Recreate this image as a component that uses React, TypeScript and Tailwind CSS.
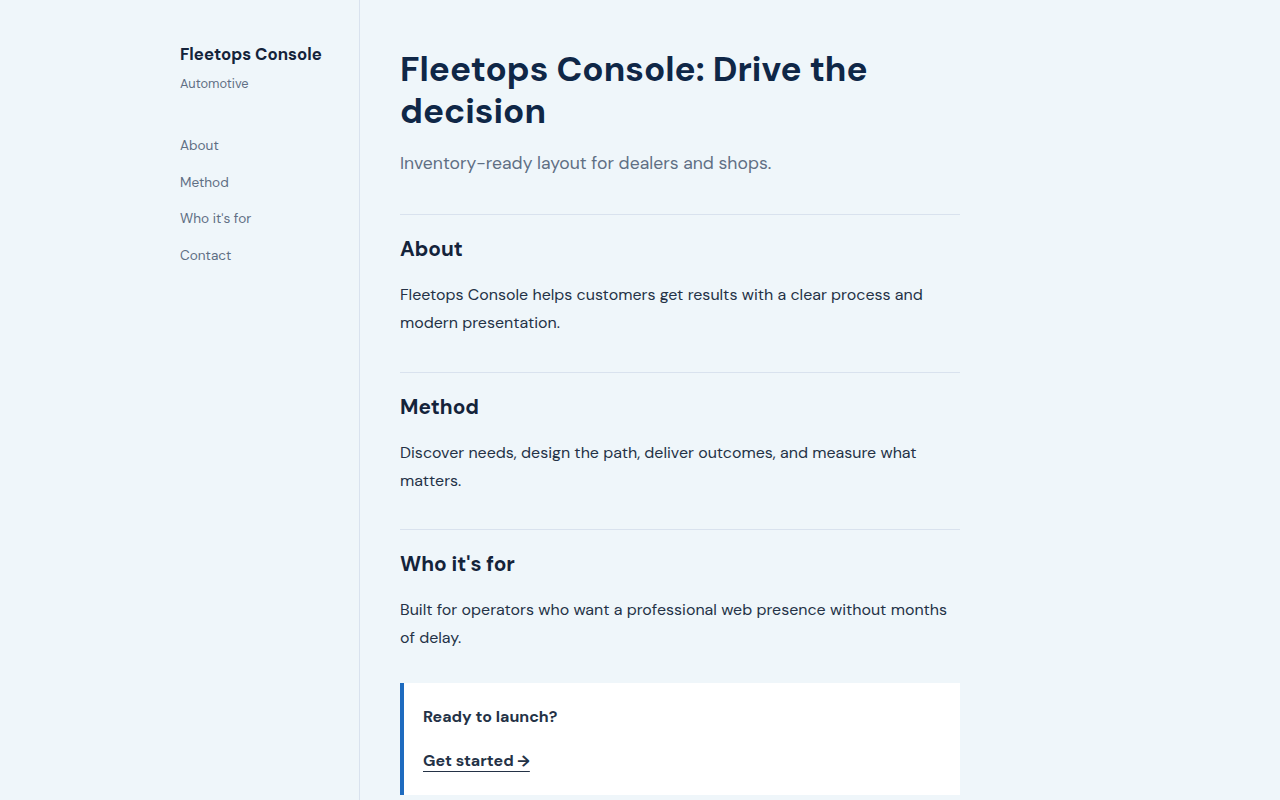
import React from "react";

const font = { fontFamily: '"DM Sans", Lato, "Noto Sans", sans-serif' };

export default function App() {
  const sections = [
    {
      title: "About",
      body: "Fleetops Console helps customers get results with a clear process and modern presentation.",
      pb: "pb-[35px]",
    },
    {
      title: "Method",
      body: "Discover needs, design the path, deliver outcomes, and measure what matters.",
      pb: "pb-[34px]",
    },
    {
      title: "Who it's for",
      body: "Built for operators who want a professional web presence without months of delay.",
      pb: "pb-[31px]",
    },
  ];
  return (
    <div className="min-h-[800px] bg-[#eff6fa]" style={font}>
      <div className="mx-auto flex w-[920px] min-h-[800px]">
        <aside className="w-[180px] shrink-0 border-r border-[#d9e2ee] pt-[43px]">
          <div className="text-[16.8px] font-bold leading-[22px] text-[#14233a]">Fleetops Console</div>
          <div className="mt-[11px] text-[12.8px] leading-[16px] text-[#5f6f84]">Automotive</div>
          <nav className="mt-[45px] flex flex-col gap-[18.67px] text-[13.6px] leading-[18px] text-[#5f6f84]">
            <a>About</a>
            <a>Method</a>
            <a>Who it's for</a>
            <a>Contact</a>
          </nav>
        </aside>
        <main className="w-[600px] pl-[40px] pt-[48px]">
          <h1 className="text-[35px] font-bold leading-[42px] text-[#0f2747]">
            Fleetops Console: Drive the decision
          </h1>
          <p className="mt-[18px] text-[17.6px] leading-[26px] text-[#5f6f84]">
            Inventory-ready layout for dealers and shops.
          </p>
          <div className="mt-[38px]">
            {sections.map((s) => (
              <section key={s.title} className={"border-t border-[#d9e2ee] pt-[20px] " + s.pb}>
                <h2 className="text-[20.8px] font-bold leading-[28px] text-[#14233a]">{s.title}</h2>
                <p className="mt-[18px] text-[16px] leading-[28px] text-[#243246]">{s.body}</p>
              </section>
            ))}
          </div>
          <div className="border-l-[4px] border-[#1e6bbf] bg-white px-[19px] pt-[22px] pb-[22px]">
            <div className="text-[16px] font-bold leading-[24px] text-[#243246]">Ready to launch?</div>
            <a className="mt-[20px] inline-block text-[16px] font-bold leading-[24px] text-[#243246] underline underline-offset-[5px]">
              Get started →
            </a>
          </div>
        </main>
      </div>
    </div>
  );
}
